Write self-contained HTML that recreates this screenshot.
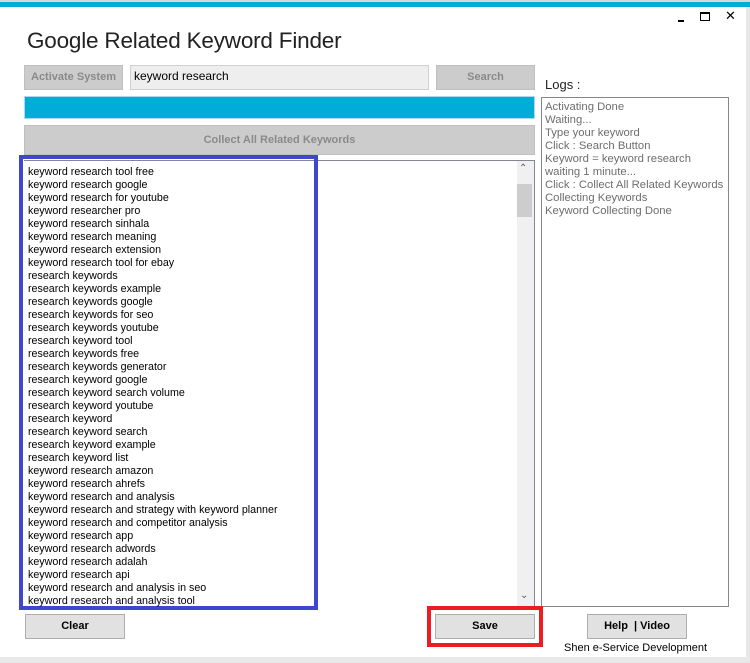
<!DOCTYPE html>
<html><head><meta charset="utf-8"><style>
*{margin:0;padding:0;box-sizing:border-box}
body{width:750px;height:663px;background:#fff;position:relative;overflow:hidden;font-family:"Liberation Sans",Tahoma,sans-serif;}
.a{position:absolute}
.btn{position:absolute;background:#e1e1e1;border:1px solid #adadad;font-size:12px;font-weight:bold;text-align:center;color:#000}
.dis{background:#cccccc;border:1px solid #bfbfbf;color:#8a8a8a}
.list{font-size:10.7px;line-height:13px;color:#000;white-space:nowrap}
</style></head><body>
<div class="a" style="left:0;top:0;width:750px;height:2px;background:#d8d8d8"></div>
<div class="a" style="left:0;top:2px;width:750px;height:5px;background:#00acd8"></div>
<div class="a" style="left:746px;top:7px;width:4px;height:656px;background:#e8e8e8"></div>
<div class="a" style="left:0;top:657px;width:750px;height:6px;background:#e8e8e8"></div>
<div class="a" style="left:678px;top:20px;width:6px;height:2px;background:#000"></div>
<div class="a" style="left:700px;top:12px;width:10px;height:9px;border:1px solid #000;border-top-width:2px"></div>
<div class="a" style="left:725px;top:8px;font-size:13px;color:#000">✕</div>
<div class="a" style="left:27px;top:28px;font-size:22.5px;color:#222;letter-spacing:-0.2px">Google Related Keyword Finder</div>
<div class="btn dis" style="left:24px;top:65px;width:99px;height:25px;line-height:23px;font-size:11px">Activate System</div>
<div class="a" style="left:130px;top:65px;width:299px;height:25px;background:#eeeeee;border:1px solid #d0d0d0;font-size:12px;padding:3px 3px;color:#000">keyword research</div>
<div class="btn dis" style="left:436px;top:65px;width:99px;height:25px;line-height:23px;font-size:11px">Search</div>
<div class="a" style="left:545px;top:77px;font-size:13px;color:#222">Logs :</div>
<div class="a" style="left:24px;top:96px;width:511px;height:23px;background:#00acd8;border:1px solid #b0d8e8"></div>
<div class="btn dis" style="left:24px;top:125px;width:511px;height:30px;line-height:28px;font-size:11px">Collect All Related Keywords</div>
<div class="a" style="left:24px;top:160px;width:511px;height:447px;border:1px solid #828790;border-left:none;border-bottom:none"></div>
<div class="a" style="left:517px;top:161px;width:17px;height:445px;background:#f0f0f0"></div>
<div class="a" style="left:517px;top:184px;width:15px;height:33px;background:#cdcdcd"></div>
<div class="a" style="left:519px;top:163px;font-size:10px;color:#606060">&#8963;</div>
<div class="a" style="left:520px;top:590px;font-size:10px;color:#606060">&#8964;</div>
<div class="a" style="left:19px;top:155px;width:299px;height:455px;border:4px solid #3f48cc"></div>
<div class="a list" style="left:28px;top:166px">keyword research tool free<br>keyword research google<br>keyword research for youtube<br>keyword researcher pro<br>keyword research sinhala<br>keyword research meaning<br>keyword research extension<br>keyword research tool for ebay<br>research keywords<br>research keywords example<br>research keywords google<br>research keywords for seo<br>research keywords youtube<br>research keyword tool<br>research keywords free<br>research keywords generator<br>research keyword google<br>research keyword search volume<br>research keyword youtube<br>research keyword<br>research keyword search<br>research keyword example<br>research keyword list<br>keyword research amazon<br>keyword research ahrefs<br>keyword research and analysis<br>keyword research and strategy with keyword planner<br>keyword research and competitor analysis<br>keyword research app<br>keyword research adwords<br>keyword research adalah<br>keyword research api<br>keyword research and analysis in seo<br>keyword research and analysis tool</div>
<div class="a" style="left:541px;top:97px;width:188px;height:510px;border:1px solid #828790"></div>
<div class="a list" style="left:545px;top:101px;color:#6d6d6d;font-size:11.3px">Activating Done<br>Waiting...<br>Type your keyword<br>Click : Search Button<br>Keyword = keyword research<br>waiting 1 minute...<br>Click : Collect All Related Keywords<br>Collecting Keywords<br>Keyword Collecting Done</div>
<div class="btn" style="left:25px;top:614px;width:100px;height:25px;line-height:23px;font-size:11px">Clear</div>
<div class="a" style="left:427px;top:606px;width:116px;height:41px;border:4px solid #ed1c24"></div>
<div class="btn" style="left:435px;top:614px;width:100px;height:25px;line-height:23px;font-size:11px">Save</div>
<div class="btn" style="left:587px;top:614px;width:100px;height:25px;line-height:23px;font-size:11px">Help &nbsp;| Video</div>
<div class="a" style="left:564px;top:642px;font-size:11px;color:#000">Shen e-Service Development</div>
</body></html>
